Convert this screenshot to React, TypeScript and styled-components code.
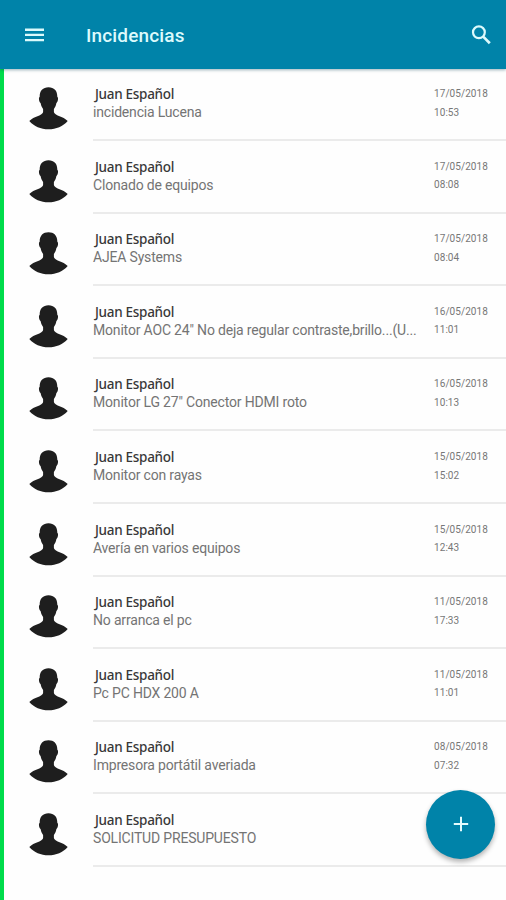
import React from "react";
import styled, { createGlobalStyle } from "styled-components";

const GlobalStyle = createGlobalStyle`
  * { box-sizing: border-box; }
  body { margin: 0; background: #fefefe; font-family: Roboto, "Liberation Sans", sans-serif; }
`;

const Screen = styled.div`
  position: relative;
  display: flex;
  flex-direction: column;
  width: 506px;
  height: 900px;
  overflow: hidden;
  background: #fefefe;
`;

const AppBar = styled.header`
  z-index: 1;
  flex: none;
  display: flex;
  align-items: center;
  height: 69px;
  padding: 0 15px 0 25px;
  background: #0083a9;
  box-shadow: 0 1px 3px rgba(0, 60, 80, 0.4);
  color: #dcfafc;
`;

const IconButton = styled.button`
  display: flex;
  padding: 0;
  border: 0;
  background: none;
  color: inherit;
`;

const Title = styled.h1`
  flex: 1;
  margin: 2px 0 0 41px;
  font-size: 19px;
  font-weight: 500;
  line-height: 24px;
  letter-spacing: 0.15px;
`;

const List = styled.ul`
  flex: 1;
  margin: 0;
  padding: 0 0 0 23px;
  border-left: 4px solid #00dc4b;
  list-style: none;
`;

const Row = styled.li`
  display: flex;
  height: 72.6px;
`;

const Avatar = styled.svg`
  flex: none;
  width: 43px;
  height: 44px;
  margin: 17px 23px 0 0;
`;

const Content = styled.div`
  flex: 1;
  display: flex;
  min-width: 0;
  margin-bottom: 0.6px;
  padding-top: 16px;
  border-bottom: 2px solid #ebebeb;
`;

const Texts = styled.div`
  flex: none;
  width: 341px;
`;

const Name = styled.div`
  padding-left: 2px;
  color: #383838;
  font: 500 13.5px/19px "Noto Sans", sans-serif;
  letter-spacing: -0.3px;
`;

const Subject = styled.div`
  color: #747474;
  font-size: 14px;
  line-height: 17px;
  letter-spacing: -0.18px;
  white-space: nowrap;
`;

const Stamp = styled.div`
  color: #777;
  font-size: 10px;
  line-height: 18.600px;
  letter-spacing: 0.07px;
`;

const AddButton = styled.button`
  position: absolute;
  z-index: 2;
  right: 11px;
  bottom: 41px;
  display: flex;
  align-items: center;
  justify-content: center;
  width: 69px;
  height: 69px;
  padding: 0 0 2px;
  border: 0;
  border-radius: 50%;
  background: #0083a9;
  color: #e4fbfd;
  box-shadow: 0 3px 5px rgba(0, 0, 0, 0.3);
`;

interface Incident {
  subject: string;
  date: string;
  time: string;
}

const incidents: Incident[] = [
  { subject: "incidencia Lucena", date: "17/05/2018", time: "10:53" },
  { subject: "Clonado de equipos", date: "17/05/2018", time: "08:08" },
  { subject: "AJEA Systems", date: "17/05/2018", time: "08:04" },
  { subject: 'Monitor AOC 24" No deja regular contraste,brillo...(U...', date: "16/05/2018", time: "11:01" },
  { subject: 'Monitor LG 27" Conector HDMI roto', date: "16/05/2018", time: "10:13" },
  { subject: "Monitor con rayas", date: "15/05/2018", time: "15:02" },
  { subject: "Avería en varios equipos", date: "15/05/2018", time: "12:43" },
  { subject: "No arranca el pc", date: "11/05/2018", time: "17:33" },
  { subject: "Pc PC HDX 200 A", date: "11/05/2018", time: "11:01" },
  { subject: "Impresora portátil averiada", date: "08/05/2018", time: "07:32" },
  { subject: "SOLICITUD PRESUPUESTO", date: "", time: "" },
];

function Person() {
  return (
    <Avatar viewBox="0 0 43 44" fill="#1e1e1e">
      <path d="M21.500 1.200c5.500 0 9 3.400 8.800 9.600 1.400.8.700 5.300-.9 6.200-.5 2.800-1.400 4.600-2.500 6v3.200c.5 1.600 2.500 2.600 5 3.800 3.500 1.300 6.500 2.600 8.800 5-4.700 5.400-11.500 8.300-19.200 8.300S7 40.400 2.300 35c2.300-2.400 5.300-3.700 8.800-5 2.500-1.200 4.500-2.200 5-3.800V23c-1.100-1.400-2-3.200-2.500-6-1.600-.9-2.300-5.400-.9-6.200-.2-6.200 3.300-9.600 8.800-9.600Z" />
    </Avatar>
  );
}

export default function App() {
  return (
    <Screen>
      <GlobalStyle />
      <AppBar>
        <IconButton aria-label="Menú">
          <svg width="20" height="14" fill="currentColor">
            <path d="M0 .6h19v2.300H0zM0 5.700h19v2.300H0zM0 10.900h19v2.300H0z" />
          </svg>
        </IconButton>
        <Title>Incidencias</Title>
        <IconButton aria-label="Buscar">
          <svg width="20" height="20" fill="none" stroke="currentColor" strokeWidth="2.200">
            <circle cx="7.900" cy="7.300" r="5.900" />
            <path d="m12.200 11.600 6.600 6.600" strokeWidth="2.700" />
          </svg>
        </IconButton>
      </AppBar>
      <List>
        {incidents.map((item) => (
          <Row key={item.subject}>
            <Person />
            <Content>
              <Texts>
                <Name>Juan Español</Name>
                <Subject>{item.subject}</Subject>
              </Texts>
              <div>
                <Stamp>{item.date}</Stamp>
                <Stamp>{item.time}</Stamp>
              </div>
            </Content>
          </Row>
        ))}
      </List>
      <AddButton aria-label="Añadir">
        <svg width="16" height="16" stroke="currentColor" strokeWidth="2">
          <path d="M8 .8v14.400M.8 8h14.400" />
        </svg>
      </AddButton>
    </Screen>
  );
}
